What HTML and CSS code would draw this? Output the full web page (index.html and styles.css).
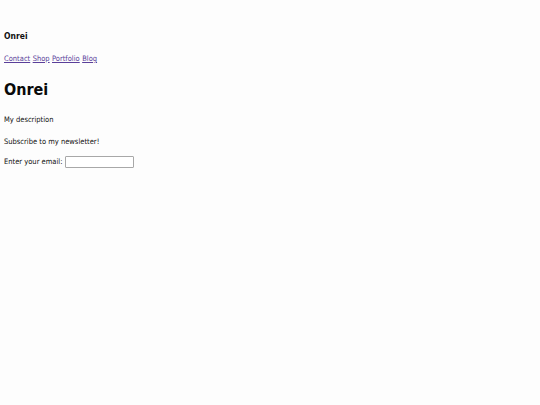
FILE: index.html
```html
<!DOCTYPE html>
<html>
<head>
<meta charset="utf-8">
<link rel="stylesheet" href="styles.css">
</head>
<body>
<header class="site-header">
  <div class="site-title">Onrei</div>
  <nav class="site-nav">
    <a href="#">Contact</a>
    <a href="#">Shop</a>
    <a href="#">Portfolio</a>
    <a href="#">Blog</a>
  </nav>
</header>
<main class="content">
  <h1 class="page-title">Onrei</h1>
  <p class="text desc">My description</p>
  <p class="text subscribe">Subscribe to my newsletter!</p>
  <form class="signup">
    <label class="text" for="email">Enter your email:</label>
    <input class="email" id="email" type="text">
  </form>
</main>
</body>
</html>
```

FILE: styles.css
```css
html, body {
  background: #fdfdfd;
}
body {
  margin: 0;
  padding: 31px 4px 0;
  font-family: "DejaVu Sans Condensed", "DejaVu Sans", sans-serif;
  font-size: 7.5px;
  line-height: 10px;
  color: #111;
}
.site-title {
  font-weight: bold;
  font-size: 8.5px;
  line-height: 10px;
}
.site-nav {
  margin-top: 13px;
  display: flex;
  gap: 2.4px;
}
.site-nav a {
  color: #5a3f9a;
  text-decoration: underline;
}
.page-title {
  margin: 17px 0 0;
  font-size: 16px;
  line-height: 18px;
  font-weight: bold;
  color: #0a0a0a;
}
.text {
  margin: 0;
}
.desc {
  margin-top: 16px;
}
.subscribe {
  margin-top: 12px;
}
.signup {
  margin-top: 9px;
  display: flex;
  align-items: center;
  gap: 3px;
}
.email {
  width: 69px;
  height: 12px;
  box-sizing: border-box;
  border: 1px solid #a8a8a8;
  border-radius: 1px;
  padding: 0;
  margin: 0;
  background: #fff;
}
```
